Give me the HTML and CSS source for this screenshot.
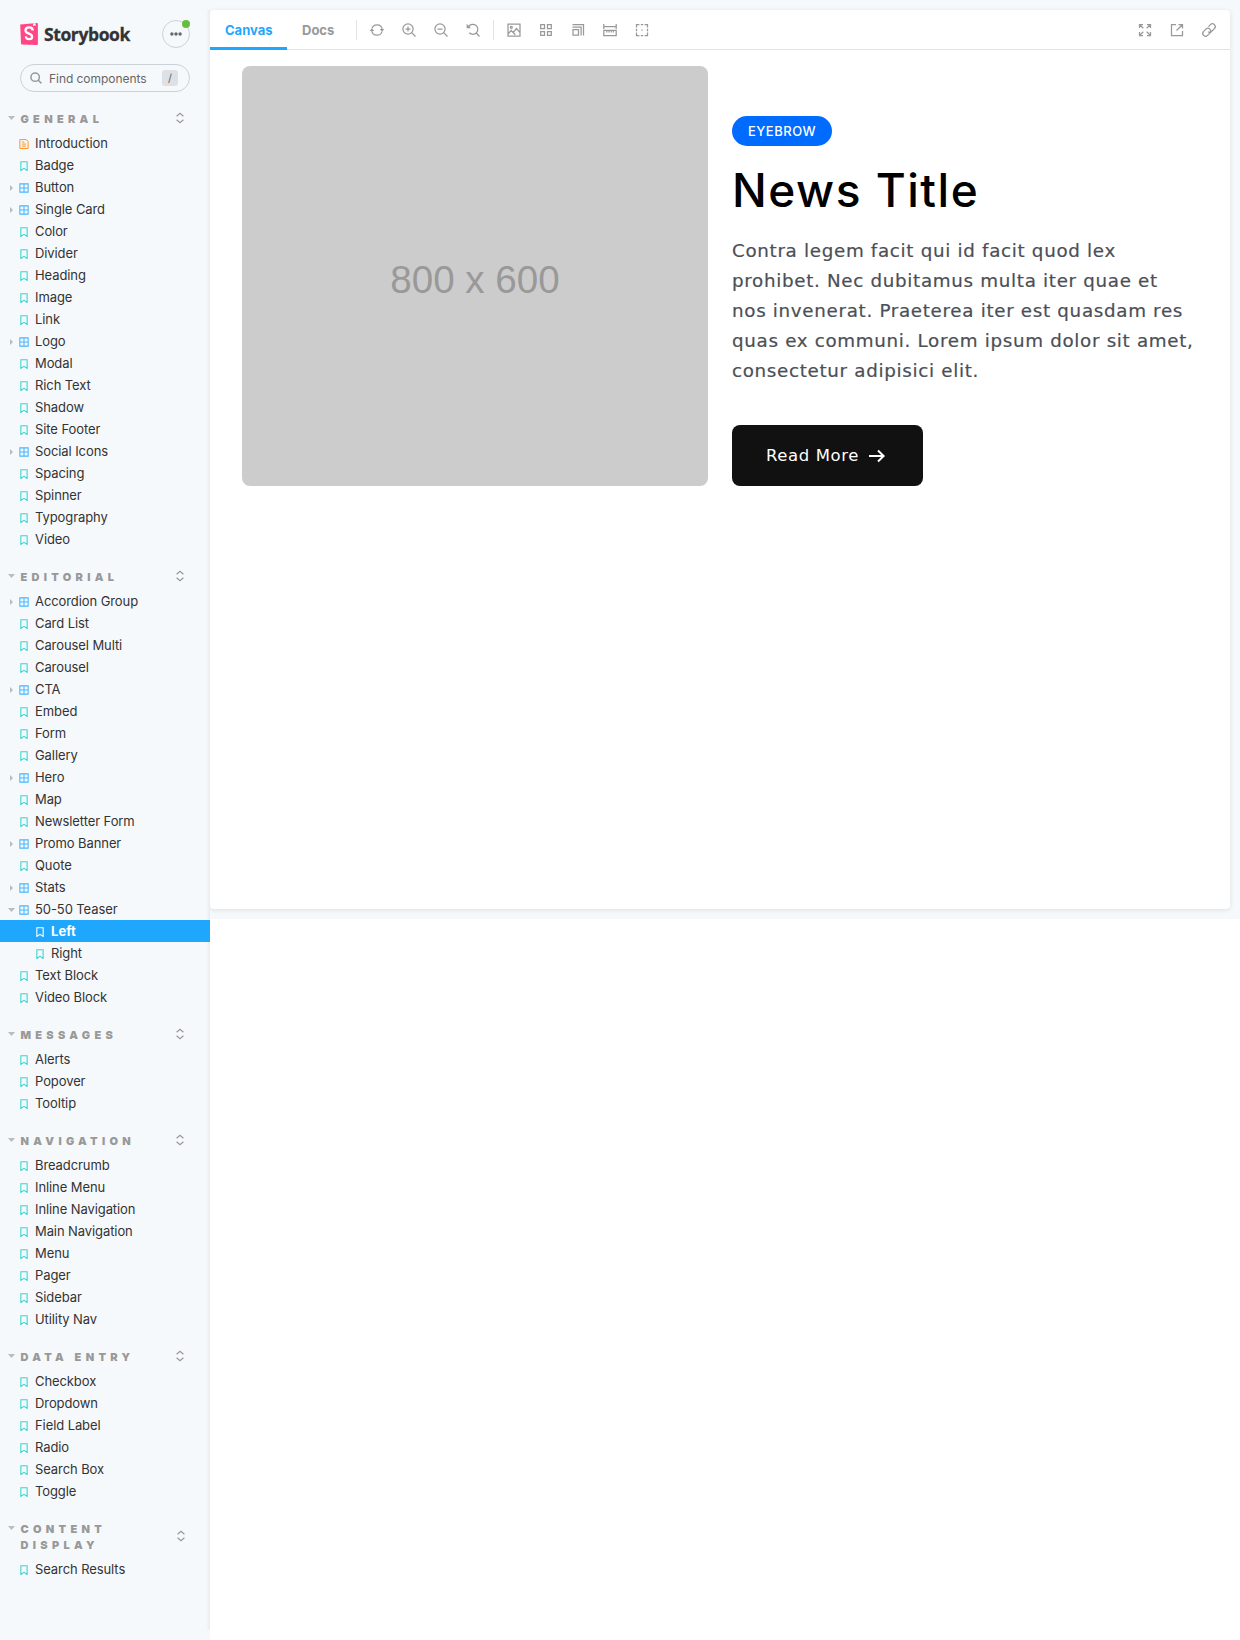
FILE: index.html
```html
<!DOCTYPE html>
<html lang="en">
<head>
<meta charset="utf-8">
<title>50-50 Teaser - Left ⋅ Storybook</title>
<link rel="stylesheet" href="styles.css">
</head>
<body>
<svg class="defs" aria-hidden="true">
  <symbol id="story" viewBox="0 0 14 14"><path d="M2.6 1h8.8v12.2L7 10.2l-4.4 3z" fill="none" stroke="currentColor" stroke-width="1.5"/></symbol>
  <symbol id="comp" viewBox="0 0 14 14"><path d="M1.2 1.2h11.6v11.6H1.2zM7 1v12M1 7h12" fill="none" stroke="currentColor" stroke-width="1.5"/></symbol>
  <symbol id="doc" viewBox="0 0 14 14"><path d="M1.2.8h9l2.6 2.6v9.8H1.2zM4 4.2h3.5M4 7.1h6M4 10h6" fill="none" stroke="currentColor" stroke-width="1.4"/></symbol>
  <symbol id="expand" viewBox="0 0 14 14"><path d="M3 5 7 1.4 11 5M3 9l4 3.6L11 9" fill="none" stroke="currentColor" stroke-width="1.4"/></symbol>
</svg>
<div class="app">
  <nav class="sidebar">
    <header class="brand">
      <svg class="brand-mark" viewBox="0 0 18 22"><path d="M.2 1.5 17 .1q.9 0 .9 1v20q0 1-1 .9L2 21.4q-1 0-1-1z" fill="#ff4785"/><path d="M13.2.4 15.5.2l.1 2.8-.9-.7-.9.8-.7-.2z" fill="#fff"/><path d="M12.7 7.4q0-3-3.5-3-3.7 0-3.7 3.2 0 2.1 3.4 3.1 3.2 1 3.2 3.1 0 2.4-2.9 2.4-3.4 0-3.2-2.8" fill="none" stroke="#fff" stroke-width="2.3"/></svg>
      <span class="brand-name">Storybook</span>
      <button class="menu-button" aria-label="Menu"><svg viewBox="0 0 14 14"><g fill="#666"><circle cx="2.9" cy="7" r="1.7"/><circle cx="7" cy="7" r="1.7"/><circle cx="11.1" cy="7" r="1.7"/></g></svg><i class="notice"></i></button>
    </header>
    <div class="search">
      <svg viewBox="0 0 14 14"><g fill="none" stroke="#999" stroke-width="1.8"><circle cx="6" cy="6" r="4.9"/><path d="m9.4 9.4 3.9 3.9"/></g></svg>
      <span class="search-label">Find components</span><kbd>/</kbd>
    </div>

    <section>
      <h2><span>GENERAL</span><svg><use href="#expand"/></svg></h2>
      <ul>
        <li class="doc"><svg><use href="#doc"/></svg>Introduction</li>
        <li><svg><use href="#story"/></svg>Badge</li>
        <li class="comp"><svg><use href="#comp"/></svg>Button</li>
        <li class="comp"><svg><use href="#comp"/></svg>Single Card</li>
        <li><svg><use href="#story"/></svg>Color</li>
        <li><svg><use href="#story"/></svg>Divider</li>
        <li><svg><use href="#story"/></svg>Heading</li>
        <li><svg><use href="#story"/></svg>Image</li>
        <li><svg><use href="#story"/></svg>Link</li>
        <li class="comp"><svg><use href="#comp"/></svg>Logo</li>
        <li><svg><use href="#story"/></svg>Modal</li>
        <li><svg><use href="#story"/></svg>Rich Text</li>
        <li><svg><use href="#story"/></svg>Shadow</li>
        <li><svg><use href="#story"/></svg>Site Footer</li>
        <li class="comp"><svg><use href="#comp"/></svg>Social Icons</li>
        <li><svg><use href="#story"/></svg>Spacing</li>
        <li><svg><use href="#story"/></svg>Spinner</li>
        <li><svg><use href="#story"/></svg>Typography</li>
        <li><svg><use href="#story"/></svg>Video</li>
      </ul>
    </section>
    <section>
      <h2><span>EDITORIAL</span><svg><use href="#expand"/></svg></h2>
      <ul>
        <li class="comp"><svg><use href="#comp"/></svg>Accordion Group</li>
        <li><svg><use href="#story"/></svg>Card List</li>
        <li><svg><use href="#story"/></svg>Carousel Multi</li>
        <li><svg><use href="#story"/></svg>Carousel</li>
        <li class="comp"><svg><use href="#comp"/></svg>CTA</li>
        <li><svg><use href="#story"/></svg>Embed</li>
        <li><svg><use href="#story"/></svg>Form</li>
        <li><svg><use href="#story"/></svg>Gallery</li>
        <li class="comp"><svg><use href="#comp"/></svg>Hero</li>
        <li><svg><use href="#story"/></svg>Map</li>
        <li><svg><use href="#story"/></svg>Newsletter Form</li>
        <li class="comp"><svg><use href="#comp"/></svg>Promo Banner</li>
        <li><svg><use href="#story"/></svg>Quote</li>
        <li class="comp"><svg><use href="#comp"/></svg>Stats</li>
        <li class="comp open"><svg><use href="#comp"/></svg>50-50 Teaser</li>
        <li class="child selected"><svg><use href="#story"/></svg>Left</li>
        <li class="child"><svg><use href="#story"/></svg>Right</li>
        <li><svg><use href="#story"/></svg>Text Block</li>
        <li><svg><use href="#story"/></svg>Video Block</li>
      </ul>
    </section>
    <section>
      <h2><span>MESSAGES</span><svg><use href="#expand"/></svg></h2>
      <ul>
        <li><svg><use href="#story"/></svg>Alerts</li>
        <li><svg><use href="#story"/></svg>Popover</li>
        <li><svg><use href="#story"/></svg>Tooltip</li>
      </ul>
    </section>
    <section>
      <h2><span>NAVIGATION</span><svg><use href="#expand"/></svg></h2>
      <ul>
        <li><svg><use href="#story"/></svg>Breadcrumb</li>
        <li><svg><use href="#story"/></svg>Inline Menu</li>
        <li><svg><use href="#story"/></svg>Inline Navigation</li>
        <li><svg><use href="#story"/></svg>Main Navigation</li>
        <li><svg><use href="#story"/></svg>Menu</li>
        <li><svg><use href="#story"/></svg>Pager</li>
        <li><svg><use href="#story"/></svg>Sidebar</li>
        <li><svg><use href="#story"/></svg>Utility Nav</li>
      </ul>
    </section>
    <section>
      <h2><span>DATA ENTRY</span><svg><use href="#expand"/></svg></h2>
      <ul>
        <li><svg><use href="#story"/></svg>Checkbox</li>
        <li><svg><use href="#story"/></svg>Dropdown</li>
        <li><svg><use href="#story"/></svg>Field Label</li>
        <li><svg><use href="#story"/></svg>Radio</li>
        <li><svg><use href="#story"/></svg>Search Box</li>
        <li><svg><use href="#story"/></svg>Toggle</li>
      </ul>
    </section>
    <section>
      <h2 class="wrapped"><span>CONTENT<br>DISPLAY</span><svg><use href="#expand"/></svg></h2>
      <ul>
        <li><svg><use href="#story"/></svg>Search Results</li>
      </ul>
    </section>
  </nav>

  <div class="stage">
    <main class="panel">
      <div class="toolbar">
        <div class="tab active">Canvas</div>
        <div class="tab docs">Docs</div>
        <div class="tools">
          <svg viewBox="0 0 14 14"><path d="M2 5.4a5.3 5.3 0 0 1 10.2.5M12 8.6a5.3 5.3 0 0 1-10.2-.5"/><path class="solid" d="M-.2 8 1.8 5.2 4.2 8zM9.8 6h4.4l-2.1 2.8z"/></svg>
          <svg viewBox="0 0 14 14"><circle cx="6" cy="6" r="5.1"/><path d="m9.6 9.6 3.9 3.9M3.5 6h5M6 3.5v5"/></svg>
          <svg viewBox="0 0 14 14"><circle cx="6" cy="6" r="5.1"/><path d="m9.6 9.6 3.9 3.9M3.5 6h5"/></svg>
          <svg viewBox="0 0 14 14"><path d="M2.6 3.6a5 5 0 1 1 .6 6.1M9.9 9.8l3.6 3.7"/><path class="solid" d="M.6.8v4.4H5z"/></svg>
        </div>
        <div class="tools">
          <svg viewBox="0 0 14 14"><path d="M1 1h12v12H1zM1.2 10.8l3-3.3 2 2 3.3-4 3.3 3.8M5.8 9.2l2.5 2.6"/><circle cx="4.3" cy="4.3" r="1"/></svg>
          <svg viewBox="0 0 14 14"><path d="M1.7 1.7h3.8v3.8H1.7zM8.5 1.7h3.8v3.8H8.5zM1.7 8.5h3.8v3.8H1.7zM8.5 8.5h3.8v3.8H8.5z"/></svg>
          <svg viewBox="0 0 14 14"><path d="M2 6.5h5.5V12H2zM1.5 4h8.6v8.6M1.5 1.5h11v11"/></svg>
          <svg viewBox="0 0 14 14"><path d="M.8 7.3h12.4v5.2H.8zM.8 1v5M13.2 1v5M1 3.5h12M3.8 7.5v2M6 7.5v2M8.2 7.5v2M10.4 7.5v2"/></svg>
          <svg viewBox="0 0 14 14"><path d="M1.5 4.4V1.5h2.9M9.6 1.5h2.9v2.9M12.5 9.6v2.9H9.6M4.4 12.5H1.5V9.6M5.8 1.5h2.4M5.8 12.5h2.4M1.5 5.8v2.4M12.5 5.8v2.4M6.4 7h1.2"/></svg>
        </div>
        <div class="tools end">
          <svg viewBox="0 0 14 14"><path d="M1.5 5V1.5H5M9 1.5h3.5V5M12.5 9v3.5H9M5 12.5H1.5V9M1.5 1.5l3.8 3.8M12.5 1.5 8.7 5.3M12.5 12.5 8.7 8.7M1.5 12.5l3.8-3.8"/></svg>
          <svg viewBox="0 0 14 14"><path d="M6 1.5H1.5v11h11V8M8.5 1.5h4V5.5M12.3 1.7 6.5 7.5"/></svg>
          <svg viewBox="0 0 14 14"><g transform="rotate(-45 7 7)"><rect x="-.6" y="4.2" width="8.8" height="5.6" rx="2.8"/><path d="M7.7 9.8h4.1a2.8 2.8 0 0 0 0-5.6H9M5 7.6a2.8 2.8 0 0 0 2.8 2.2"/></g></svg>
        </div>
      </div>
      <article class="teaser">
        <div class="placeholder">800 x 600</div>
        <div class="copy">
          <span class="eyebrow">EYEBROW</span>
          <h1>News Title</h1>
          <p>Contra legem facit qui id facit quod lex<br>prohibet. Nec dubitamus multa iter quae et<br>nos invenerat. Praeterea iter est quasdam res<br>quas ex communi. Lorem ipsum dolor sit amet,<br>consectetur adipisici elit.</p>
          <a class="cta"><span>Read More</span><svg viewBox="0 0 18 14"><path d="M1 7h15M10 1.5 15.6 7 10 12.5" fill="none" stroke="#fff" stroke-width="2"/></svg></a>
        </div>
      </article>
    </main>
  </div>
</div>
</body>
</html>
```

FILE: styles.css
```css
* { box-sizing: border-box; }
body { margin: 0; background: #fff; color: #333; font: 13px/16px Inter, "Liberation Sans", sans-serif; }
ul, h1, h2, p { margin: 0; padding: 0; }
.defs { position: absolute; width: 0; height: 0; }
.app { display: grid; grid-template-columns: 210px 1030px; height: 1640px; overflow: hidden; }

.sidebar {
  position: relative;
  z-index: 1;
  background: linear-gradient(to right, rgba(0,0,0,0), rgba(0,0,0,.05)) right 10px / 4px 1620px no-repeat, #f6f9fc;
}
.brand { display: flex; align-items: center; height: 28px; margin: 20px 20px 16px; }
.brand-mark { width: 18px; height: 22px; margin-top: -1px; }
.brand-name { margin-left: 6px; font: 700 17.5px/24px "Open Sans", sans-serif; letter-spacing: -.4px; -webkit-text-stroke: .3px #333; }
.menu-button { position: relative; display: grid; place-items: center; width: 28px; height: 28px; margin-left: auto; padding: 0; border: 1px solid #ccd1d5; border-radius: 50%; background: none; }
.menu-button svg { width: 14px; height: 14px; }
.notice { position: absolute; top: -1px; right: -1px; width: 8px; height: 8px; border-radius: 50%; background: #66bf3c; }
.search { display: flex; align-items: center; height: 28px; margin: 0 20px; padding: 0 11px 0 9px; border: 1px solid #ccd1d5; border-radius: 14px; color: #666; }
.search svg { width: 12px; height: 12px; }
.search-label { margin: 1px 0 0 7px; font-size: 12px; letter-spacing: -.05px; }
.search kbd { width: 16px; height: 16px; margin-left: auto; border-radius: 3px; background: #dde1e5; font: 11px/16px Inter, sans-serif; text-align: center; }

.sidebar h2 { display: flex; align-items: center; justify-content: space-between; margin: 19px 24px 5px 0; padding-left: 20.5px; position: relative; color: #999; font-size: 11px; font-weight: 900; line-height: 16px; letter-spacing: 4.3px; }
.sidebar h2 svg { width: 12px; height: 12px; margin-top: -2px; }
.sidebar h2.wrapped { margin-right: 23px; }
.sidebar h2::before,
.sidebar .open::before { content: ""; position: absolute; left: 8px; top: 5px; width: 7px; height: 4px; background: #bbb; clip-path: polygon(0 0, 100% 0, 50% 100%); }
.sidebar ul { list-style: none; }
.sidebar li { display: flex; align-items: center; height: 22px; padding-left: 19px; position: relative; letter-spacing: -.09px; }
.sidebar li svg { width: 10px; height: 10px; margin-right: 6px; margin-top: 2px; color: #37d5d3; }
.sidebar .comp svg { color: #1ea7fd; opacity: .8; }
.sidebar .doc svg { color: #ff8300; opacity: .85; }
.sidebar .comp::before { content: ""; position: absolute; left: 10px; top: 9px; width: 3px; height: 6px; background: #bbb; clip-path: polygon(0 0, 100% 50%, 0 100%); }
.sidebar .open::before { left: 8px; top: 10px; width: 7px; height: 4px; clip-path: polygon(0 0, 100% 0, 50% 100%); }
.sidebar .child { padding-left: 35px; }
.sidebar .selected { background: #1ea7fd; color: #fff; font-weight: 700; letter-spacing: .1px; }
.sidebar .selected svg { color: #fff; }

.stage { height: 919px; padding: 10px 10px 10px 0; background: #f6f9fc; }
.panel { height: 899px; border-radius: 4px; background: #fff; box-shadow: 0 1px 5px rgba(0,0,0,.1); }
.toolbar { display: flex; align-items: center; height: 40px; border-bottom: 1px solid #e3e3e3; }
.tab { height: 40px; padding: 0 15px; color: #999; font-weight: 700; line-height: 41px; }
.tab.active { width: 77px; border-bottom: 3px solid #1ea7fd; color: #1ea7fd; }
.tab.docs { width: 69px; }
.tools { display: flex; align-items: center; gap: 18px; height: 20px; padding-left: 13px; border-left: 1px solid #e3e3e3; }
.tools + .tools { margin-left: 13px; }
.tools svg { width: 14px; height: 14px; fill: none; stroke: #999; stroke-width: 1.25; overflow: visible; }
.tools .solid { fill: #999; stroke: none; }
.toolbar .tools.end { margin-left: auto; padding: 0 14px 0 0; border: 0; }

.teaser { display: grid; grid-template-columns: 466px 466px; gap: 24px; padding: 16px 32px; }
.placeholder { display: grid; place-items: center; height: 420px; padding-top: 8px; border-radius: 8px; background: #ccc; color: #999; font: 38.6px/44px "Liberation Sans", sans-serif; }
.copy { display: flex; flex-direction: column; align-items: flex-start; padding-top: 50px; }
.eyebrow { width: 100px; height: 30px; border-radius: 15px; background: #006bff; color: #fff; font-size: 13px; font-weight: 450; line-height: 31px; letter-spacing: .5px; text-align: center; }
h1 { margin-top: 16px; color: #000; font: 500 46px/56px Inter, sans-serif; letter-spacing: 1.5px; }
.copy p { margin-top: 18px; color: #4b4f56; font: 400 18.3px/30px "DejaVu Sans", sans-serif; letter-spacing: .68px; white-space: nowrap; -webkit-text-stroke: .2px #4b4f56; }
.cta { display: flex; align-items: center; justify-content: center; width: 191px; height: 61px; margin-top: 39px; padding: 1px 3px 0 0; border-radius: 8px; background: #111; color: #fff; font-family: "DejaVu Sans", sans-serif; font-size: 16.5px; letter-spacing: .6px; }
.cta svg { width: 18px; height: 14px; margin-left: 9px; }
```
